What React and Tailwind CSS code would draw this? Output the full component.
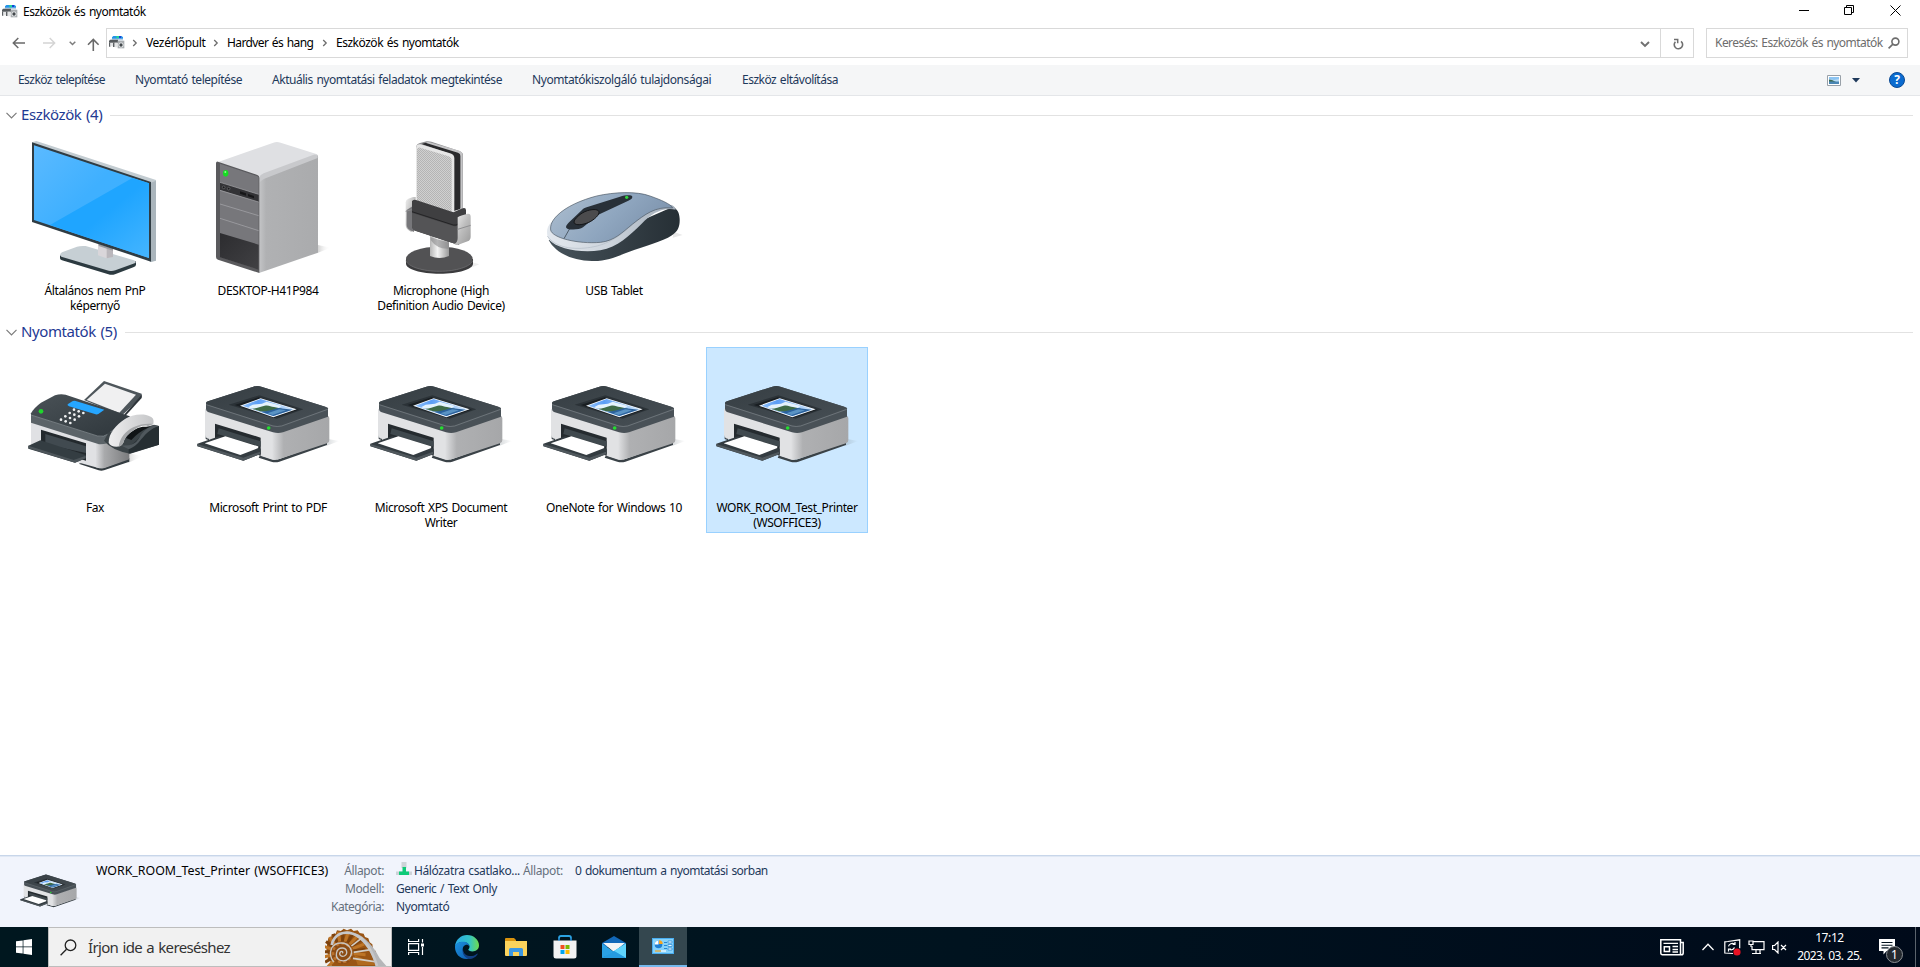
import React from "react";

function Chevron({ className }) {
  return (
    <svg className={className} width="6" height="8" viewBox="0 0 6 8" fill="none" stroke="#6d6d6d" strokeWidth="1.3">
      <path d="M1.2 1l3 3-3 3" />
    </svg>
  );
}

function DevicesIcon() {
  return (
    <svg width="16" height="16" viewBox="0 0 48 48" className="shrink-0">
      <path d="M9 7l4-4h25l4 4v6H9z" fill="#2493e8" />
      <path d="M22 3h8v7h-8z" fill="#22d39a" />
      <path d="M30 3h6v6h-6z" fill="#1540d8" />
      <path d="M8 11h34v5H8z" fill="#b9d0e4" />
      <path d="M0 18l3-4h24v9H0z" fill="#54595c" />
      <path d="M0 23h4v12H0zM12 23h5v13h-5z" fill="#5b5f62" />
      <path d="M5 24h7v10H5zM17 23h8v14h-8z" fill="#e3e5e6" />
      <path d="M26 17h20v23H26z" fill="#a9adb0" />
      <circle cx="36" cy="30" r="7.5" fill="#eceeef" />
      <circle cx="36" cy="30" r="5" fill="#43484c" />
    </svg>
  );
}

function Monitor() {
  return (
    <svg width="162" height="150" viewBox="42 30 486 450">
      <defs>
        <linearGradient id="screen" x1="0" y1="0" x2="1" y2="1">
          <stop offset="0" stopColor="#5bbaff" />
          <stop offset=".45" stopColor="#3fb0ff" />
          <stop offset="1" stopColor="#3db0ff" />
        </linearGradient>
        <linearGradient id="glare" x1="0" y1="0" x2="1" y2="1">
          <stop offset="0" stopColor="#1fa5ff" />
          <stop offset=".5" stopColor="#1fa5ff" />
          <stop offset="1" stopColor="#45b5ff" />
        </linearGradient>
      </defs>
      <path d="M180 406v9q0 4 6 6l139 42q10 3 20 0l55-21q8-3 8-8v-10z" fill="#2c3a40" />
      <path d="M186 397l45-17q9-3 26-2l145 43q9 4 2 9l-58 21q-10 4-20 1L184 410q-8-6 2-13z" fill="#c6cfd4" />
      <path d="M294 370h45v40l-20 5-25-9z" fill="#d9d6da" />
      <path d="M320 380l19 6v25l-19 4z" fill="#bab7bc" />
      <path d="M296 372l43 14v6l-43-14z" fill="#9a9ca2" />
      <path d="M96 67l13-4 359 117v240l-17 6z" fill="#c3ccd1" />
      <path d="M453 188l15-6v240l-15 4z" fill="#aab5bc" />
      <path d="M96 67l357 119v239L96 306z" fill="#303c43" />
      <path d="M102 76l345 114v224L102 300z" fill="url(#screen)" />
      <path d="M397 174l50 16v224L150 315z" fill="url(#glare)" />
    </svg>
  );
}

function Tower() {
  return (
    <svg width="162" height="150" viewBox="561 30 486 450">
      <defs>
        <linearGradient id="towerSide" x1="0" y1="0" x2="1" y2="0">
          <stop offset="0" stopColor="#c4c5c7" />
          <stop offset=".12" stopColor="#b0b1b3" />
          <stop offset="1" stopColor="#aaabad" />
        </linearGradient>
        <linearGradient id="towerShadow" x1="0" y1="0" x2="1" y2="0">
          <stop offset="0" stopColor="#d4d4d4" />
          <stop offset="1" stopColor="#ffffff" stopOpacity="0" />
        </linearGradient>
        <linearGradient id="bay" x1="0" y1="0" x2="1" y2="1">
          <stop offset="0" stopColor="#2c2c2f" />
          <stop offset="1" stopColor="#414144" />
        </linearGradient>
      </defs>
      <path d="M954 375l38 8-38 15z" fill="url(#towerShadow)" />
      <path d="M777 168l167-66q10 0 10 10v286L777 459z" fill="url(#towerSide)" />
      <path d="M648 128l172-60q10-4 22 0l107 34q6 3 0 8l-160 60q-10 5-20 2z" fill="#dfe0e3" />
      <path d="M777 172q4-8 14-12l150-56q12-2 12 10l-160 62q-10 5-16 14z" fill="#c8c9cc" />
      <path d="M648 130q0-6 6-5l118 40q6 2 6 9v285l-124-40q-6-2-6-8z" fill="#5a5a5d" />
      <path d="M660 131l116 39v278l-116-37z" fill="#77777b" />
      <path d="M660 187l116 36v23l-116-36z" fill="#333336" />
      <path d="M660 339l116 35v75l-116-37z" fill="url(#bay)" />
      <path d="M660 252l116 35M660 295l116 37M660 187l116 36M660 211l116 35" stroke="#a9a9ad" strokeWidth="2" fill="none" />
      <path d="M720 214l18 6v7l-18-6zM744 222l18 6v7l-18-6z" fill="#161618" />
      <circle cx="671" cy="202" r="4" fill="#19191b" stroke="#858589" strokeWidth="1.5" />
      <circle cx="686" cy="206" r="4" fill="#19191b" stroke="#858589" strokeWidth="1.5" />
      <ellipse cx="677" cy="160" rx="8" ry="10" fill="#16dd22" />
      <ellipse cx="676" cy="156" rx="3" ry="3" fill="#8cff8a" />
    </svg>
  );
}

function Microphone() {
  return (
    <svg width="162" height="150" viewBox="0 30 486 450">
      <defs>
        <pattern id="mesh" width="6" height="6" patternUnits="userSpaceOnUse">
          <rect width="6" height="6" fill="#d0d0d0" />
          <path d="M0 0h3v3H0zM3 3h3v3H3z" fill="#b4b4b4" />
        </pattern>
        <linearGradient id="stem" x1="0" y1="0" x2="1" y2="0">
          <stop offset="0" stopColor="#b5b5b5" />
          <stop offset=".4" stopColor="#f4f4f4" />
          <stop offset="1" stopColor="#999999" />
        </linearGradient>
        <linearGradient id="arm" x1="0" y1="0" x2="1" y2="1">
          <stop offset="0" stopColor="#f0f0f0" />
          <stop offset=".5" stopColor="#bdbdbd" />
          <stop offset="1" stopColor="#9a9a9a" />
        </linearGradient>
      </defs>
      <path d="M330 425l28 8-28 12z" fill="#eeeeee" />
      <path d="M138 417v14c0 16 44 30 101 30s100-14 100-30v-14z" fill="#3b3b3d" />
      <ellipse cx="238" cy="417" rx="100" ry="37" fill="#525254" />
      <path d="M138 422c6 18 50 32 100 32s94-14 100-32" fill="none" stroke="#77777a" strokeWidth="2" />
      <path d="M210 340h57v68q-28 12-57 0z" fill="url(#stem)" />
      <path d="M212 352l55 16v18q-36 2-55-26z" fill="#88888a" opacity=".6" />
      <path d="M137 247q0-8 8-11l14-5h8v100l-14 4q-16-8-16-20z" fill="url(#arm)" />
      <path d="M140 270v44q0 10 10 16l12 6v-80z" fill="#77777a" />
      <path d="M168 84q0-12 12-15l20-5q6-1 14 1l84 28q11 4 11 12v160h-40L168 240z" fill="#8d8d8f" />
      <path d="M185 72l18-5 90 28q8 3 8 12v160l-26 8V110l-10-10z" fill="#2a2a2c" />
      <path d="M204 65l94 27q10 4 10 14v160h-6V108q0-8-8-10l-98-30z" fill="#c5c5c7" />
      <path d="M168 86q0-15 14-13l88 27q13 4 13 14v166l-115-36z" fill="#e6e6e6" />
      <path d="M171 92q0-12 10-9l80 24q14 4 14 14v156l-104-32z" fill="url(#mesh)" />
      <path d="M156 244q2-6 12-4l112 37 24-11q14-6 14 5v70l-22 34-130-43q-10-4-10-14z" fill="#3f3f41" />
      <path d="M156 275l124 40q8 2 16-4v-8" fill="none" stroke="#242426" strokeWidth="3" />
      <path d="M156 278l124 40q8 2 16-4v46q-4 12-16 10l-112-37q-12-4-12-14z" fill="#545456" />
      <path d="M293 292q4-3 14-6l16-5q9-1 9 9v60q0 10-9 14l-28 10q-8 2-12-2 10-4 10-18z" fill="url(#arm)" />
      <path d="M293 328l39-12M137 274l18-5" stroke="#8f8f91" strokeWidth="3" fill="none" />
    </svg>
  );
}

function Mouse() {
  return (
    <svg width="162" height="150" viewBox="519 30 486 450">
      <defs>
        <linearGradient id="shell" x1="0" y1="0" x2="1" y2=".4">
          <stop offset="0" stopColor="#aebfd0" />
          <stop offset=".6" stopColor="#8fa6bf" />
          <stop offset="1" stopColor="#7d93ad" />
        </linearGradient>
        <linearGradient id="base" x1="0" y1="0" x2="1" y2="0">
          <stop offset="0" stopColor="#46525a" />
          <stop offset="1" stopColor="#262f35" />
        </linearGradient>
        <linearGradient id="rim" x1="0" y1="0" x2="1" y2="0">
          <stop offset="0" stopColor="#e3e8ee" />
          <stop offset=".5" stopColor="#cdd4dc" />
          <stop offset="1" stopColor="#9faab6" />
        </linearGradient>
      </defs>
      <path d="M940 335l28 10-30 8z" fill="#e8e8e8" />
      <path d="M566 360c20 38 70 62 130 63 46 1 70-12 110-27 50-18 100-30 130-50 18-12 24-26 23-50-1-18-6-28-20-36L780 330z" fill="url(#base)" />
      <path d="M561 335c0-10 4-20 14-30l200-70 160 20c8 4 10 8 12 14-40-8-72 12-102 42-40 38-70 69-124 80-60 10-130-6-152-30-6-8-8-15-8-26z" fill="url(#rim)" />
      <path d="M562 348c24 36 80 42 130 34 54-8 90-36 124-66 42-36 74-60 124-52" fill="none" stroke="#b3bcc7" strokeWidth="2" />
      <path d="M572 330c-2-16 6-30 20-44 26-26 72-46 118-58 52-12 120-15 160 0 34 12 62 24 68 36-52-6-84 20-120 48-32 26-54 50-96 55-70 6-146-14-150-37z" fill="url(#shell)" stroke="#4b5864" strokeWidth="2" />
      <path d="M612 356l18-32" stroke="#3e4a55" strokeWidth="2.5" />
      <path d="M622 326c-8-4-2-12 6-20l38-36c4-4 8-6 14-8l100-32c16-5 36-6 37 0 0 6-4 8-12 12l-90 42-46 38c-10 8-40 8-47 4z" fill="#283038" />
      <path d="M642 306c0-8 20-28 40-34s36-4 35 6-20 26-38 32-37 6-37-4z" fill="#4b4b4d" stroke="#141618" strokeWidth="3" />
      <circle cx="800" cy="232" r="5" fill="#2fd23c" />
    </svg>
  );
}

function Fax() {
  const keys = [];
  for (let r = 0; r < 4; r++) for (let c = 0; c < 3; c++) keys.push([222 + c * 14 - r * 13, 269 + c * 5 + r * 10]);
  return (
    <svg width="162" height="150" viewBox="42 81 486 450">
      <defs>
        <linearGradient id="faxTop" x1="0" y1="0" x2="1" y2="1">
          <stop offset="0" stopColor="#4a5257" />
          <stop offset="1" stopColor="#2d353a" />
        </linearGradient>
        <linearGradient id="faxSide" x1="0" y1="0" x2="1" y2="0">
          <stop offset="0" stopColor="#dcdde0" />
          <stop offset=".25" stopColor="#a9aaac" />
          <stop offset="1" stopColor="#7a7b7d" />
        </linearGradient>
        <linearGradient id="faxShadow" x1="0" y1="0" x2="1" y2="0">
          <stop offset="0" stopColor="#d8d8d8" />
          <stop offset="1" stopColor="#ffffff" stopOpacity="0" />
        </linearGradient>
        <linearGradient id="handset" x1="0" y1="0" x2="1" y2="0">
          <stop offset="0" stopColor="#eeeeef" />
          <stop offset="1" stopColor="#c4c5c7" />
        </linearGradient>
      </defs>
      <path d="M385 400l45 8-45 20z" fill="url(#faxShadow)" />
      <path d="M252 240l60-57 113 38v10l-60 56z" fill="#4e565b" />
      <path d="M260 240l55-49 93 33-50 54z" fill="#f0f0f1" />
      <path d="M372 284l53-60v10l-47 52z" fill="#2d3439" />
      <path d="M256 425l42 18q6 2 14 0l76-28v10l-76 26q-8 2-16 0l-60-20z" fill="#343c41" />
      <path d="M93 305l215 65v75h-10L222 424 93 385z" fill="#e0e1e4" />
      <path d="M288 370l24 0 76-40v88l-74 26q-10 2-26-2z" fill="url(#faxSide)" />
      <path d="M123 329l135 41v52l-135-40z" fill="#23292d" />
      <path d="M136 342l122 37v20l-122-26z" fill="#414a50" />
      <path d="M85 377l36-16 136 44v10l-32 13-140-42z" fill="#343d42" />
      <path d="M85 377l136 43 36-13v8l-32 13-140-43z" fill="#4d555a" />
      <path d="M93 280q8-16 30-32l42-22q16-6 32-2l190 64q8 4 4 10l-60 56q-12 10-32 4L93 288z" fill="url(#faxTop)" />
      <path d="M93 286l198 62q20 4 34-6l8-8v30q-12 10-36 9L93 308z" fill="#5b6368" />
      <path d="M93 285l200 63q18 4 32-6l56-48" stroke="#8b9297" strokeWidth="2" fill="none" />
      <path d="M203 253l14-9q4-3 10-1l86 26-18 13q-4 2-8 1l-80-24q-6-3-4-6z" fill="#26a6ff" />
      {keys.map(([x, y], i) => (
        <circle key={i} cx={x} cy={y} r="4" fill="#f0f1f2" />
      ))}
      <circle cx="123" cy="274" r="7" fill="#1fd62c" />
      <path d="M312 362l14-26 60 0 76-22 15 4v56l-86 27q-56-10-79-39z" fill="#3b4347" />
      <path d="M386 378c30-10 34-46 91-60v56l-91 27z" fill="#262e32" />
      <path d="M378 354q20-30 50-34l22 0q-36 16-56 40z" fill="#101416" />
      <path d="M362 376q40 4 54-20 14-28 46-40l15 2c-50 16-50 54-91 70z" fill="#50585d" />
      <path d="M326 368c0-28 22-52 48-70 20-13 54-20 78-8 8 4 10 10 8 22l-16 6c-14-4-28 2-42 12-18 12-26 20-32 38-8 18-38 14-44 0z" fill="url(#handset)" />
      <path d="M356 380c4-28 20-46 44-58 20-10 42-12 60-10l-16 6c-14-4-28 2-42 12-18 12-26 20-32 38-3 7-8 11-14 12z" fill="#a4a6a8" />
    </svg>
  );
}

function Printer({ width = 162, height = 150, viewBox = "561 81 486 450" }) {
  return (
    <svg width={width} height={height} viewBox={viewBox} className="shrink-0">
      <defs>
        <linearGradient id="prTop" x1="0" y1="0" x2="1" y2="1">
          <stop offset="0" stopColor="#363e43" />
          <stop offset="1" stopColor="#474f55" />
        </linearGradient>
        <linearGradient id="prSide" x1="0" y1="0" x2="1" y2="0">
          <stop offset="0" stopColor="#dfe0e2" />
          <stop offset=".2" stopColor="#afb0b2" />
          <stop offset="1" stopColor="#a6a7a9" />
        </linearGradient>
        <linearGradient id="prSky" x1="0" y1="0" x2="1" y2="0">
          <stop offset="0" stopColor="#8fc0fa" />
          <stop offset=".3" stopColor="#5b9df5" />
          <stop offset="1" stopColor="#d3e8fb" />
        </linearGradient>
        <linearGradient id="prShadow" x1="0" y1="0" x2="1" y2="0">
          <stop offset="0" stopColor="#7f8990" stopOpacity=".3" />
          <stop offset="1" stopColor="#7f8990" stopOpacity="0" />
        </linearGradient>
      </defs>
      <path d="M980 356l38 7-38 14z" fill="url(#prShadow)" />
      <path d="M617 345l10 4v12l-10-4zM780 406l36 11q10 3 22 0l143-52v10l-143 50q-12 4-24 0l-38-12z" fill="#3a4247" />
      <path d="M615 266l202 64q12 4 10 14v75h-10l-36-12-160-52q-6-4-6-10z" fill="#e1e2e4" />
      <path d="M817 334q20 4 30-1l136-46q5 2 5 8v65q0 8-7 10l-143 47q-10 3-21 1z" fill="url(#prSide)" />
      <path d="M645 311l137 42v54l-20-6-117-46z" fill="#252b2f" />
      <path d="M656 325l126 39v16l-130-38z" fill="#40494e" />
      <path d="M592 371l66-22 124 37v16l-52 20-138-43z" fill="#343c41" />
      <path d="M592 372l138 41 50-18v8l-50 19-138-44z" fill="#50585d" />
      <path d="M614 370l62-21 98 30q3 2-1 6l-52 20z" fill="#fff" />
      <path d="M618 256v-6q0-4 6-6l136-44q12-4 24 0l196 62q6 2 4 6v22l-135 47q-14 4-30 0L624 276q-6-3-6-9z" fill="#495157" />
      <path d="M618 250q0-4 6-6l136-44q12-4 24 0l192 60q8 4 2 8l-132 48q-12 4-26 0L622 254z" fill="url(#prTop)" />
      <path d="M619 254l200 64q12 3 26 0l138-50" stroke="#858c91" strokeWidth="1.8" fill="none" />
      <path d="M686 254l92-28 132 42-80 28z" fill="#2b3237" />
      <path d="M704 255l72-23 120 37-74 24z" fill="#191e22" />
      <path d="M720 257l62-22 108 33-70 24z" fill="#f7fafc" />
      <path d="M727 257l55-20 101 31-63 21z" fill="url(#prSky)" />
      <path d="M744 262l14-8 28-3 14-6 45 13-20 14-40 4z" fill="#e4f2fd" />
      <path d="M756 266c14 0 24-6 38-9 12-3 18 3 28 4l24 5c-14 10-40 12-66 8z" fill="#3f6b48" />
      <path d="M780 274c18 1 32-3 54-10l44 5-58 19z" fill="#2c629c" />
      <path d="M802 280l36-12 20 3-40 14z" fill="#5a93c4" />
      <circle cx="806" cy="324" r="5.5" fill="#24de30" />
    </svg>
  );
}

function Item({ icon, lines, selected }) {
  return (
    <div
      className={
        "flex h-[186px] w-[162px] flex-col items-center border text-center " +
        (selected ? "border-[#99d1ff] bg-[#cce8ff]" : "border-transparent")
      }
    >
      <div className="-mx-px -mt-px h-[153px] w-[162px]">{icon}</div>
      <div className="whitespace-nowrap text-[12px] leading-[15px] tracking-[-0.4px] text-black">
        {lines.map((l) => (
          <div key={l}>{l}</div>
        ))}
      </div>
    </div>
  );
}

function Group({ title, children }) {
  return (
    <section className="h-[217px]">
      <div className="flex h-[34px] items-center pl-[6px] pr-[7px] pt-[4px]">
        <svg width="11" height="7" viewBox="0 0 11 7" fill="none" stroke="#7b7b7b" strokeWidth="1.2">
          <path d="M.5 .8l5 5 5-5" />
        </svg>
        <h2 className="ml-[4px] whitespace-nowrap pb-[2px] text-[15px] leading-[20px] tracking-[-0.4px] text-[#1f3a93]">{title}</h2>
        <div className="ml-[8px] h-px flex-1 bg-[#e2e2e2]" />
      </div>
      <div className="flex gap-[11px] pl-[14px]">{children}</div>
    </section>
  );
}

function TitleBar() {
  return (
    <div className="flex h-[28px] items-start pl-[2px]">
      <div className="flex h-[23px] items-center">
        <DevicesIcon />
        <span className="ml-[5px] pt-px text-[12px] tracking-[-0.48px]">Eszközök és nyomtatók</span>
      </div>
      <div className="ml-auto flex h-[20px] items-center text-black">
        <div className="flex w-[45px] justify-center">
          <svg width="10" height="10" viewBox="0 0 10 10"><path d="M0 5.5h10" stroke="#000" /></svg>
        </div>
        <div className="flex w-[46px] justify-center">
          <svg width="10" height="10" viewBox="0 0 10 10" fill="none" stroke="#000">
            <path d="M.5 2.5h7v7h-7zM2.5 2.5v-2h7v7h-2" />
          </svg>
        </div>
        <div className="flex w-[46px] justify-center">
          <svg width="11" height="11" viewBox="0 0 11 11" stroke="#000"><path d="M.5 .5l10 10M10.5 .5l-10 10" /></svg>
        </div>
        <div className="w-[2px]" />
      </div>
    </div>
  );
}

function AddressBar() {
  return (
    <div className="flex h-[30px] items-center">
      <div className="flex w-[106px] items-center pl-[12px]">
        <svg width="13" height="12" viewBox="0 0 13 12" fill="none" stroke="#6a6a6a" strokeWidth="1.5">
          <path d="M13 6H1.5M6.3 1L1.3 6l5 5" />
        </svg>
        <svg className="ml-[18px]" width="13" height="12" viewBox="0 0 13 12" fill="none" stroke="#d4d4d4" strokeWidth="1.4">
          <path d="M0 6h11.5M6.7 1l5 5-5 5" />
        </svg>
        <svg className="ml-[13px]" width="7" height="5" viewBox="0 0 7 5" fill="none" stroke="#7d7d7d" strokeWidth="1.5">
          <path d="M.7 .7l2.8 2.8L6.3 .7" />
        </svg>
        <svg className="ml-[11px] mt-[2px]" width="13" height="13" viewBox="0 0 13 13" fill="none" stroke="#6a6a6a" strokeWidth="1.6">
          <path d="M6.3 13V1.5M1 6.8L6.3 1.4l5.3 5.4" />
        </svg>
      </div>
      <div className="flex h-[30px] w-[1588px] items-center border border-[#d9d9d9] pl-[2px]">
        <DevicesIcon />
        <Chevron className="ml-[7px]" />
        <span className="ml-[8px] w-[59px] whitespace-nowrap text-[12px] tracking-[-0.37px]">Vezérlőpult</span>
        <Chevron className="ml-[8px]" />
        <span className="ml-[8px] w-[86px] whitespace-nowrap text-[12px] tracking-[-0.6px]">Hardver és hang</span>
        <Chevron className="ml-[9px]" />
        <span className="ml-[8px] whitespace-nowrap text-[12px] tracking-[-0.48px]">Eszközök és nyomtatók</span>
        <svg className="ml-auto mr-[10px] mt-[2px]" width="10" height="7" viewBox="0 0 10 7" fill="none" stroke="#707070" strokeWidth="1.9">
          <path d="M1 1l4 4 4-4" />
        </svg>
        <div className="flex h-full w-[33px] items-center justify-center border-l border-[#d9d9d9]">
          <svg className="ml-[2px] mt-[1px]" width="11" height="12" viewBox="0 0 11 12" fill="none" stroke="#6f6f6f" strokeWidth="1.6">
            <path d="M8 3.3A4.2 4.2 0 1 1 2.4 3.7" />
            <path d="M1 1.4h3.7v3.9" strokeWidth="1.5" />
          </svg>
        </div>
      </div>
      <div className="ml-[12px] flex h-[30px] w-[202px] items-center border border-[#d9d9d9] pl-[8px] pr-[7px]">
        <span className="whitespace-nowrap text-[12px] tracking-[-0.55px] text-[#6d6d6d]">Keresés: Eszközök és nyomtatók</span>
        <svg className="ml-auto shrink-0" width="12" height="12" viewBox="0 0 12 12" fill="none" stroke="#6d6d6d" strokeWidth="1.6">
          <circle cx="7.4" cy="4.6" r="3.5" />
          <path d="M4.9 7.1L.6 11.4" />
        </svg>
      </div>
    </div>
  );
}

function Toolbar() {
  return (
    <div className="mt-[7px] flex h-[31px] items-center border-b border-[#e4e6e9] bg-[#f5f6f7] text-[12px] tracking-[-0.45px] text-[#1e395b]">
      <span className="ml-[18px] w-[117px] whitespace-nowrap tracking-[-0.56px]">Eszköz telepítése</span>
      <span className="w-[137px] whitespace-nowrap">Nyomtató telepítése</span>
      <span className="w-[260px] whitespace-nowrap tracking-[-0.47px]">Aktuális nyomtatási feladatok megtekintése</span>
      <span className="w-[210px] whitespace-nowrap tracking-[-0.42px]">Nyomtatókiszolgáló tulajdonságai</span>
      <span className="whitespace-nowrap tracking-[-0.5px]">Eszköz eltávolítása</span>
      <svg className="ml-auto" width="14" height="11" viewBox="0 0 14 11">
        <path d="M.5 .5h13v10H.5z" fill="#fff" stroke="#98a0a8" />
        <path d="M2 2h10v3H2z" fill="#8cc4f2" />
        <path d="M2 4l5 1 5-1v3H2z" fill="#b8dcf5" />
        <path d="M2 4.5l3 .5 4 2H2z" fill="#3c6b52" />
        <path d="M2 6.5h10V9H2z" fill="#4a86b4" />
      </svg>
      <svg className="ml-[11px]" width="8" height="5" viewBox="0 0 8 5"><path d="M0 0h8L4 4.5z" fill="#1e395b" /></svg>
      <div className="ml-[29px] mr-[15px] flex size-[16px] items-center justify-center rounded-full border border-[#0a4a94] bg-[#0a6bd0] text-[12px] font-bold leading-none text-white">
        ?
      </div>
    </div>
  );
}

function DetailsPane() {
  const label = "text-right text-[#66707c]";
  return (
    <div className="flex h-[72px] whitespace-nowrap border-t border-[#c8d6ea] bg-[#f1f4fc] text-[12px] leading-[18px] tracking-[-0.38px] text-[#1e395b] shadow-[inset_0_1px_0_#e0e8f4]">
      <div className="w-[96px] pl-[16px] pt-[12px]">
        <Printer width={69} height={50} viewBox="561 152 486 351" />
      </div>
      <div className="w-[232px] pt-[6px] text-[12.4px] tracking-[-0.03px] text-black">WORK_ROOM_Test_Printer (WSOFFICE3)</div>
      <div className={"w-[56px] pt-[6px] " + label}>
        <div>Állapot:</div>
        <div>Modell:</div>
        <div className="-ml-4 tracking-[-0.5px]">Kategória:</div>
      </div>
      <div className="w-[126px] pl-[12px] pt-[6px]">
        <div className="flex items-center">
          <svg className="mr-[2px] mt-[-4px] shrink-0" width="16" height="14" viewBox="0 0 16 14">
            <path d="M0 9.5h16v3.5H0z" fill="#cdd3d8" />
            <path d="M5.5 0h5v6h-5z" fill="#cdd3d8" />
            <path d="M6.5 5h3.5v4.5h3V13H3V9.5h3.5z" fill="#0fca78" />
          </svg>
          <span>Hálózatra csatlako...</span>
        </div>
        <div className="tracking-[-0.45px]">Generic / Text Only</div>
        <div>Nyomtató</div>
      </div>
      <div className="ml-[13px] w-[41px] pt-[6px] text-[#66707c]">Állapot:</div>
      <div className="pl-[11px] pt-[6px] tracking-[-0.52px]">0 dokumentum a nyomtatási sorban</div>
    </div>
  );
}

function Shell() {
  const ribs = [];
  for (let i = 0; i < 17; i++) {
    const a = Math.PI * (0.78 + (i / 16) * 1.25);
    ribs.push(
      <path
        key={i}
        d={`M${1025 + 22 * Math.cos(a)} ${323 + 22 * Math.sin(a)}L${1030 + 64 * Math.cos(a)} ${323 + 66 * Math.sin(a)}`}
        stroke={i % 2 ? "#7d420d" : "#bd7527"}
        strokeWidth="9"
      />
    );
  }
  return (
    <svg width="62" height="38" viewBox="972 249 186 114" className="shrink-0">
      <path d="M978 300l4-20 8-2 2-10 12-2 4-10 12 2 8-7 10 5 12-5 8 7 12-2 6 8 12 2 4 10 10 4 4 12 8 6 2 14 8 6 4 16 4 10 14 14 2 9H992l-4-18-8-8 2-12-6-12z" fill="#9a5514" />
      {ribs}
      <path d="M1060 330l70 30h-60z" fill="#b06a1e" />
      <path d="M1060 264c34 10 60 44 76 76l20 23h-32c-8-34-30-70-64-92z" fill="#b5b6b8" />
      <path d="M992 300c8-34 36-42 64-34 34 12 56 44 72 97" fill="none" stroke="#c6c7c9" strokeWidth="8" />
      <path d="M1056 322l54-8M1056 340l64 10M1050 304l34-26" stroke="#d2cdc4" strokeWidth="5" />
      <circle cx="1024" cy="323" r="34" fill="#8c4c14" />
      <circle cx="1024" cy="323" r="28" fill="none" stroke="#b9702a" strokeWidth="8" strokeDasharray="9 7" />
      <path d="M1024 325c4-4-2-8-6-4-6 8 4 16 12 12 12-6 8-24-6-24-20 0-24 28-8 36 22 10 44-14 32-36-12-20-44-20-56 0-6 14-4 30 6 42" fill="none" stroke="#c9c6c0" strokeWidth="4" />
    </svg>
  );
}

function Taskbar() {
  return (
    <div className="flex h-[40px] items-center bg-linear-to-r from-[#00171f] via-[#00131f] to-[#000a1a] text-white">
      <div className="flex w-[48px] justify-center">
        <svg width="16" height="16" viewBox="0 0 16 16" fill="#fff">
          <path d="M0 2.3l6.7-.9v6.2H0zM7.4 1.2L16 0v7.6H7.4zM0 8.3h6.7v6.3L0 13.7zM7.4 8.3H16V16l-8.6-1.2z" />
        </svg>
      </div>
      <div className="flex h-[40px] w-[344px] items-center border border-[#bdbdbd] bg-[#f1f1f1] pl-[11px]">
        <svg width="17" height="17" viewBox="0 0 17 17" fill="none" stroke="#222" strokeWidth="1.3">
          <circle cx="10.5" cy="6.3" r="5.3" />
          <path d="M6.5 10.2L.6 16.3" />
        </svg>
        <span className="ml-[11px] whitespace-nowrap text-[15px] tracking-[-0.66px] text-[#333]">Írjon ide a kereséshez</span>
        <div className="ml-auto mr-[4px]"><Shell /></div>
      </div>
      <div className="flex w-[49px] justify-center">
        <svg width="17" height="16" viewBox="0 0 17 16" fill="none" stroke="#fff" strokeWidth="1.2">
          <path d="M.6 0v2.5h10V0M.6 16v-2.5h10V16M.6 4.6h10v6.8H.6zM14.5 0v3.5M14.5 8v8" />
          <path d="M13 4.5h3v3h-3z" fill="#fff" stroke="none" />
        </svg>
      </div>
      <div className="flex w-[52px] justify-center">
        <svg width="24" height="24" viewBox="0 0 24 24">
          <defs>
            <linearGradient id="edgeA" x1="0" y1="0" x2="1" y2="0">
              <stop offset="0" stopColor="#2aa9e6" />
              <stop offset=".6" stopColor="#33c4c8" />
              <stop offset="1" stopColor="#6fdc4c" />
            </linearGradient>
            <linearGradient id="edgeB" x1="0" y1="0" x2="1" y2="1">
              <stop offset="0" stopColor="#1b93e0" />
              <stop offset="1" stopColor="#0f5cae" />
            </linearGradient>
          </defs>
          <path d="M0 11.5C.5 4.5 6 0 12 0c7 0 12 5 12 10.2 0 4-3 6.2-6.5 6.2-2.5 0-4.2-1-4.2-1.7 0-.6 1.2-1 1.2-2.9C14.5 9 11.5 7 8 7c-4 0-7 2-8 4.5z" fill="url(#edgeA)" />
          <path d="M0 12C0 9 3.5 6.8 8 6.8c3.5 0 6.3 2 6.5 4.7-1-1.5-2.5-2-4-1.5C8 11 7.5 13 7.8 15.5c.5 4.5 4 7.5 7 8C6 25.5 0 19.5 0 12z" fill="url(#edgeB)" />
          <path d="M8 14c0 5.5 5 7.5 9 7 2.5-.3 4.3-1.6 5-2.3.5-.3.8.2.5.7-2 3-5 4.4-7.7 4.5C10 23.5 6.5 18.5 8 14z" fill="#123f82" />
        </svg>
      </div>
      <div className="flex w-[46px] justify-center">
        <svg width="22" height="18" viewBox="0 0 22 18">
          <path d="M0 1q0-1 1-1h8l2 2v2H0z" fill="#d9930e" />
          <path d="M0 3h22v14q0 1-1 1H1q-1 0-1-1z" fill="#fbd35c" />
          <path d="M4 18v-6.5q0-1.500 1.500-1.500h11q1.500 0 1.500 1.500V18h-4v-4H8v4z" fill="#3b97e3" />
        </svg>
      </div>
      <div className="flex w-[51px] justify-center">
        <svg width="24" height="24" viewBox="0 0 24 24">
          <path d="M6 7V3q0-2 2-2h8q2 0 2 2v4" fill="none" stroke="#2ba3e2" strokeWidth="1.8" />
          <path d="M.5 5.5h23V21q0 2.5-2.5 2.5H3Q.5 23.5 .5 21z" fill="#f2f3f4" />
          <path d="M6 5.5V3.5M18 5.5V3.5" stroke="#1d6fb0" strokeWidth="1.8" />
          <path d="M7.5 10h4v4h-4z" fill="#f25022" />
          <path d="M12.5 10h4v4h-4z" fill="#7fba00" />
          <path d="M7.5 15h4v4h-4z" fill="#00a4ef" />
          <path d="M12.5 15h4v4h-4z" fill="#ffb900" />
        </svg>
      </div>
      <div className="flex w-[47px] justify-center">
        <svg width="24" height="22" viewBox="0 0 24 22">
          <path d="M0 7L12 0l12 7v4H0z" fill="#1268b8" />
          <path d="M1 7h22L12 16z" fill="#f3f4f5" />
          <path d="M0 7.5l12 8.5L0 22z" fill="#2aa1e4" />
          <path d="M24 7.5L12 15 0 22h24z" fill="#31b6ee" />
          <path d="M12 15l12 7V7.5z" fill="#5fd3fb" />
          <path d="M0 22l12-7 12 7z" fill="#259be0" />
        </svg>
      </div>
      <div className="ml-[2px] flex h-[40px] w-[48px] items-center justify-center border-b-2 border-[#76b9ed] bg-[#34474f]">
        <svg width="22" height="16" viewBox="0 0 22 16">
          <path d="M0 0h22v16H0z" fill="#4aaef0" />
          <path d="M1 1h20v14H1z" fill="#86d2fb" />
          <circle cx="6.5" cy="6.5" r="3.8" fill="#1f7fd4" />
          <path d="M6.5 6.5V2.7A3.8 3.8 0 0 0 2.7 6.5z" fill="#fff" />
          <path d="M7 6V2.2A3.8 3.8 0 0 1 10.8 6z" fill="#f5a623" />
          <path d="M12 4.5h3M12 7.5h3M12 10.5h3" stroke="#2a86d0" strokeWidth="1" />
          <path d="M16 3h4v2h-4zM16 6.5h4v2h-4zM16 10h4v2h-4z" fill="#e9f7ff" stroke="#2a86d0" strokeWidth=".7" />
          <path d="M3 13h6" stroke="#f5a623" strokeWidth="1.2" />
          <path d="M9 13h5" stroke="#fff" strokeWidth="1.2" />
        </svg>
      </div>
      <div className="ml-auto flex h-[40px] items-center">
        <svg width="24" height="17" viewBox="0 0 24 17" fill="none" stroke="#fff" strokeWidth="1.5">
          <path d="M.8 .8h19.7v15H2.5Q.8 15.8 .8 14zM20.5 3.5h2.7v10.5q0 1.8-1.8 1.8h-2" />
          <path d="M3.5 4.3h14.5M12.5 7.5h5.5M12.5 10.5h5.5M12.5 13h5.5" strokeWidth="1.3" />
          <path d="M4.3 7.7h5.2v4.8H4.3z" />
        </svg>
        <svg className="ml-[18px]" width="12" height="8" viewBox="0 0 12 8" fill="none" stroke="#fff" strokeWidth="1.3">
          <path d="M.5 7L6 1.3 11.5 7" />
        </svg>
        <svg className="ml-[10px]" width="17" height="17" viewBox="0 0 17 17" fill="none" stroke="#fff" strokeWidth="1.2">
          <path d="M9 14.5L.8 14V2.8l3-.3L15.7.8v8.5" />
          <path d="M4.5 7.3a4 3.5 0 0 1 6-2.3M11 3v2.5H8.5M10.5 8.5A4 3.5 0 0 1 5.5 10.5M4.5 12.5V10H7" strokeWidth="1.2" />
          <circle cx="13" cy="13" r="3.6" fill="#e81123" stroke="none" />
        </svg>
        <svg className="ml-[7px]" width="17" height="15" viewBox="0 0 17 15" fill="none" stroke="#fff" strokeWidth="1.2">
          <path d="M5 1.7h11v8H4V6M8 10v3M4 13.5h9M12 10v3" />
          <path d="M1 1h4v3.5H1zM3 4.5V7" />
        </svg>
        <svg className="ml-[7px]" width="15" height="13" viewBox="0 0 15 13" fill="none" stroke="#fff" strokeWidth="1.2">
          <path d="M.6 4.5h2L6 1v11L2.6 8.5h-2zM9 4l5 5M14 4L9 9" />
        </svg>
        <div className="ml-[8px] w-[69px] whitespace-nowrap text-center text-[12px] leading-[18px] tracking-[-0.65px]">
          <div className="tracking-[-0.4px]">17:12</div>
          <div>2023. 03. 25.</div>
        </div>
        <div className="relative ml-[15px] mr-[12px] mt-[8px] h-[24px] w-[24px]">
          <svg width="16" height="16" viewBox="0 0 16 16">
            <path d="M0 0h16v12H7.5L4.5 15.5V12H0z" fill="#fff" />
            <path d="M2.5 3.5h11M2.5 6.2h11M2.5 8.9h7" stroke="#00101c" strokeWidth="1.1" />
          </svg>
          <span className="absolute left-[7px] top-[7px] flex size-[17px] items-center justify-center rounded-full border border-[#8b8f94] bg-[#24292f] text-[12px] leading-none">
            1
          </span>
        </div>
        <div className="h-full w-px bg-[#5b636c]" />
        <div className="w-[4px]" />
      </div>
    </div>
  );
}

export default function App() {
  return (
    <div className="flex h-[967px] w-[1920px] flex-col overflow-hidden bg-white font-['Noto_Sans','Open_Sans',sans-serif] text-black [word-spacing:1px]">
      <TitleBar />
      <AddressBar />
      <Toolbar />
      <main className="flex-1">
        <Group title="Eszközök (4)">
          <Item icon={<Monitor />} lines={["Általános nem PnP", "képernyő"]} />
          <Item icon={<Tower />} lines={["DESKTOP-H41P984"]} />
          <Item icon={<Microphone />} lines={["Microphone (High", "Definition Audio Device)"]} />
          <Item icon={<Mouse />} lines={["USB Tablet"]} />
        </Group>
        <Group title="Nyomtatók (5)">
          <Item icon={<Fax />} lines={["Fax"]} />
          <Item icon={<Printer />} lines={["Microsoft Print to PDF"]} />
          <Item icon={<Printer />} lines={["Microsoft XPS Document", "Writer"]} />
          <Item icon={<Printer />} lines={["OneNote for Windows 10"]} />
          <Item icon={<Printer />} lines={["WORK_ROOM_Test_Printer", "(WSOFFICE3)"]} selected />
        </Group>
      </main>
      <DetailsPane />
      <Taskbar />
    </div>
  );
}
